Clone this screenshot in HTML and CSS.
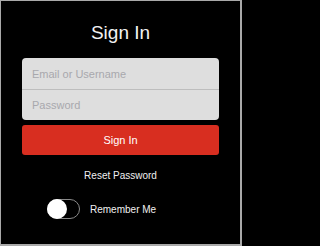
FILE: index.html
```html
<!DOCTYPE html>
<html>
<head>
<meta charset="utf-8">
<link rel="stylesheet" href="styles.css">
</head>
<body>
<div class="frame">
  <h1 class="title">Sign In</h1>
  <div class="fields">
    <div class="field">Email or Username</div>
    <div class="field">Password</div>
  </div>
  <div class="btn">Sign In</div>
  <div class="reset">Reset Password</div>
  <div class="remember">
    <div class="toggle"><div class="knob"></div></div>
    <span class="label">Remember Me</span>
  </div>
</div>
</body>
</html>
```
FILE: styles.css
```css
html, body { margin: 0; padding: 0; background: #000; }
body { width: 242px; height: 246px; overflow: hidden; font-family: "Liberation Sans", Arial, sans-serif; }
.frame {
  box-sizing: border-box;
  width: 242px; height: 246px;
  border-style: solid; border-color: #a9a9a9;
  border-width: 1px 2px 2px 1px;
  background: #000;
  display: flex; flex-direction: column;
  padding: 0 21px 0 21px;
}
.title {
  margin: 0; padding-top: 21px; height: 36px; box-sizing: border-box;
  font-size: 19px; font-weight: normal; color: #f2f2f2;
  text-align: center; line-height: 22px;
}
.fields {
  margin-top: 21px;
  background: #dedede; border-radius: 4px;
  display: flex; flex-direction: column;
}
.field {
  height: 31px; box-sizing: border-box;
  padding-left: 10px;
  display: flex; align-items: center;
  font-size: 11px; color: #a8a8ad;
}
.field + .field { border-top: 1px solid #bdbdbd; height: 31px; }
.btn {
  margin-top: 5px; height: 30px;
  background: #d82e20; border-radius: 3px;
  display: flex; align-items: center; justify-content: center;
  color: #fff; font-size: 11px;
}
.reset {
  margin-top: 14px; text-align: center;
  color: #f0f0f0; font-size: 10px; line-height: 14px;
}
.remember {
  margin-top: 16px; padding-left: 25px;
  display: flex; align-items: center; gap: 10px;
}
.toggle {
  box-sizing: border-box;
  width: 33px; height: 20px;
  border: 1px solid #8a8a8a; border-radius: 10px;
  position: relative;
}
.knob {
  position: absolute; left: -1px; top: -1px;
  width: 20px; height: 20px; border-radius: 50%;
  background: #fff;
}
.label { color: #f0f0f0; font-size: 10px; }
```
